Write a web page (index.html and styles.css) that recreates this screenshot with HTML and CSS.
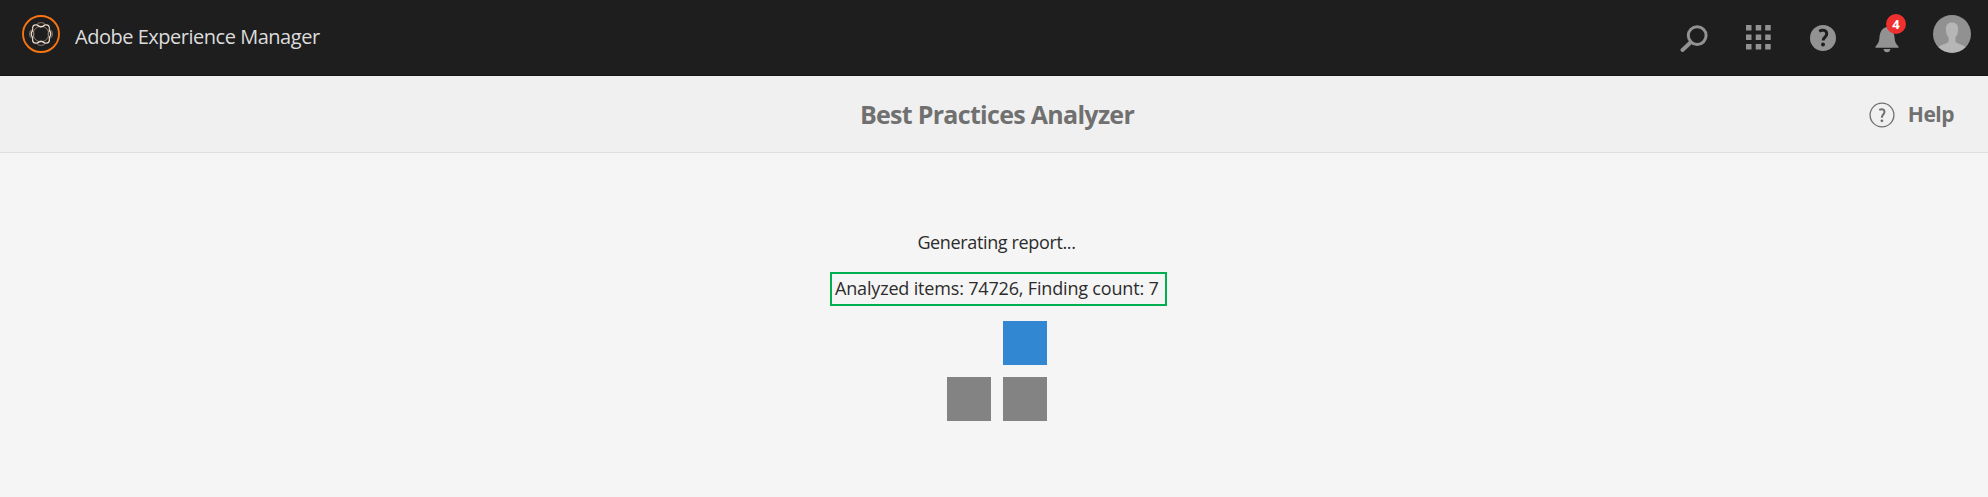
FILE: index.html
```html
<!DOCTYPE html>
<html lang="en">
<head>
<meta charset="utf-8">
<title>Best Practices Analyzer</title>
<link rel="stylesheet" href="styles.css">
</head>
<body>
<header class="shell">
  <div class="brand">
    <svg class="logo" viewBox="0 0 38 38" fill="none">
      <circle cx="19" cy="19" r="18" stroke="#f77412" stroke-width="1.9"/>
      <g stroke="#a09184" stroke-width=".8">
        <circle cx="19" cy="19" r="7.8"/>
        <ellipse cx="19" cy="9.800" rx="4" ry="2.200"/><ellipse cx="19" cy="28.200" rx="4" ry="2.200"/>
        <ellipse cx="9.800" cy="19" rx="2.200" ry="4"/><ellipse cx="28.200" cy="19" rx="2.200" ry="4"/>
      </g>
      <path stroke="#f3dfd0" stroke-width="1.200" d="M15.500 10C11.500 9.300 10 10.800 10.700 15.500M22.500 10c4-.7 5.500.8 4.800 5.500M10.700 22.500c-.7 4.700.8 6.200 4.800 5.500M27.300 22.500c.7 4.700-.8 6.200-4.800 5.500M15.500 10q3.500 3.500 7 0M15.500 28q3.500-3.500 7 0M10.700 15.500q-3 3.500 0 7M27.300 15.500q3 3.500 0 7"/>
    </svg>
    <span class="brand-name">Adobe Experience Manager</span>
  </div>
  <nav class="tools">
    <svg class="tool search" viewBox="0 0 28 28" fill="none" stroke="#929292"><circle cx="17.200" cy="10.600" r="8.900" stroke-width="3"/><path d="M10.500 17.500 2.500 25" stroke-width="4" stroke-linecap="round"/></svg>
    <svg class="tool apps" viewBox="0 0 25 25" fill="#929292"><path d="M0 0h5.500v5.500H0zM9.700 0h5.500v5.500H9.700zM19.200 0h5.500v5.500h-5.500zM0 9.500h5.500V15H0zM9.700 9.500h5.500V15H9.700zM19.200 9.500h5.500V15h-5.500zM0 19h5.500v5.500H0zM9.700 19h5.500v5.500H9.700zM19.200 19h5.500v5.500h-5.500z"/></svg>
    <svg class="tool about" viewBox="0 0 26 26"><circle cx="13" cy="13" r="13" fill="#929292"/><path d="M9.200 6.200c3.600-2 7.500-.9 7.500 2.700 0 3.100-3.600 3.300-3.600 6.700" fill="none" stroke="#1e1e1e" stroke-width="3"/><circle cx="13" cy="19.400" r="2" fill="#1e1e1e"/></svg>
    <span class="alerts">
      <svg class="bell" viewBox="0 0 24 26" fill="#929292"><path d="M12 0c5 1 7 5 7.500 10 .4 4 .5 6 4 9.500v1.200H.500v-1.200c3.300-3.500 3.600-5.500 4-9.500C5 5 7 1 12 0zM8.500 22h7c-.3 2-1.500 3.300-3.500 3.300S8.800 24 8.500 22z"/></svg>
      <span class="badge">4</span>
    </span>
    <svg class="avatar" viewBox="0 0 38 38"><circle cx="19" cy="19" r="19" fill="#919191"/><path fill="#b6b6b6" d="M19 7.500c4.300 0 6.400 2.800 6.100 7-.1 3.500-1.100 6.200-2.700 8v4.200c1.500 1.800 6 2.300 10.200 5.400A19 19 0 0 1 5.400 32.100c4.200-3.100 8.700-3.600 10.200-5.400v-4.200c-1.600-1.800-2.600-4.500-2.700-8-.3-4.200 1.800-7 6.100-7z"/></svg>
  </nav>
</header>
<div class="titlebar">
  <h1 class="title">Best Practices Analyzer</h1>
  <div class="help">
    <svg class="help-icon" viewBox="0 0 26 26" fill="none" stroke="#707070"><circle cx="13" cy="13" r="11.900" stroke-width="1.300"/><path d="M10.200 7.800c2.800-1.300 5.500-.3 5.300 2.200-.2 2.400-2.700 2.800-2.700 5.700" stroke-width="2"/><circle cx="12.900" cy="18.800" r="1.400" fill="#707070" stroke="none"/></svg>
    <span class="help-text">Help</span>
  </div>
</div>
<main class="content">
  <p class="status">Generating report...</p>
  <p class="counts">Analyzed items: 74726, Finding count: 7</p>
  <div class="loader">
    <span class="tile active"></span>
    <span class="tile"></span>
    <span class="tile"></span>
  </div>
</main>
</body>
</html>
```
FILE: styles.css
```css
* { box-sizing: border-box; }
body { margin: 0; height: 497px; overflow: hidden; background: #f5f5f5; font-family: "Open Sans", "Noto Sans", sans-serif; }
.shell { height: 76px; padding: 15px 17px 0 22px; display: flex; justify-content: space-between; background: #1e1e1e; border-bottom: 1px solid #161616; }
.brand { display: flex; gap: 15px; }
.logo { width: 38px; height: 38px; }
.brand-name { font-size: 20px; line-height: 28px; padding-top: 8px; letter-spacing: -0.48px; color: #dcdcdc; white-space: nowrap; }
.tools { display: flex; align-items: flex-start; }
.tool { margin-top: 10px; flex: none; }
.search { width: 28px; height: 28px; margin-right: 38px; }
.apps { width: 25px; height: 25px; margin-right: 39px; }
.about { width: 26px; height: 26px; margin-right: 39px; }
.alerts { position: relative; width: 24px; height: 38px; margin-right: 34px; }
.bell { display: block; width: 24px; height: 26px; margin-top: 12px; }
.badge { position: absolute; left: 11px; top: -1px; width: 20px; height: 20px; border-radius: 50%; background: #ee312f; color: #fff; font-size: 13px; font-weight: 700; line-height: 20px; text-align: center; }
.avatar { width: 38px; height: 38px; }
.titlebar { height: 77px; padding: 0 34px; display: grid; grid-template-columns: 1fr auto 1fr; align-items: center; background: #f0f0f0; border-bottom: 1px solid #dfdfdf; }
.title { grid-column: 2; margin: 0; padding-left: 6px; font-size: 25px; line-height: 34px; font-weight: 700; letter-spacing: -0.7px; color: #707070; white-space: nowrap; }
.help { display: flex; justify-content: flex-end; align-items: center; gap: 13px; color: #707070; font-size: 21px; line-height: 28px; font-weight: 700; letter-spacing: -0.5px; }
.help-icon { width: 26px; height: 26px; margin-top: 2px; }
.content { padding-top: 75px; display: flex; flex-direction: column; align-items: center; color: #2c2c2c; font-size: 18px; line-height: 28px; white-space: nowrap; }
.status { margin: 0 0 16px; padding-left: 5px; letter-spacing: -0.36px; }
.counts { margin: 0 0 15px 9px; width: 337px; height: 34px; padding: 0 0 0 3px; border: 2px solid #00b050; letter-spacing: -0.17px; }
.loader { display: grid; grid-template-columns: 44px 44px; grid-auto-rows: 44px; gap: 12px; margin-left: 6px; }
.tile { background: #838383; }
.active { grid-column: 2; background: #3287d3; }
```
